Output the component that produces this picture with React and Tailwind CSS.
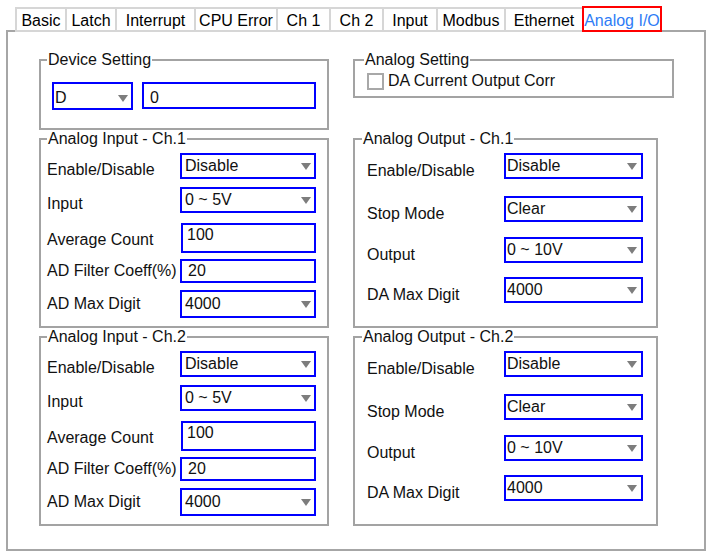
import React from "react";

const Tri = () => (
  <svg width="10" height="7" viewBox="0 0 10 7" className="shrink-0">
    <polygon points="0,0 10,0 5,7" fill="#7d7d7d" />
  </svg>
);

function Sel({ value, className }) {
  return (
    <div className={`flex justify-between border-2 border-[#0000ff] bg-white ${className}`}>
      <span className="whitespace-nowrap">{value}</span>
      <Tri />
    </div>
  );
}

function Inp({ value, className }) {
  return (
    <div className={`flex items-start border-2 border-[#0000ff] bg-white ${className}`}>
      <span className="whitespace-nowrap">{value}</span>
    </div>
  );
}

function Box({ title, className, legendCls, innerCls, children }) {
  return (
    <fieldset className={`border-2 border-[#a3a3a3] ${className}`}>
      <legend className={`px-[1px] leading-[18px] ${legendCls}`}>{title}</legend>
      <div className={innerCls}>{children}</div>
    </fieldset>
  );
}

function InputCh({ ch }) {
  return (
    <Box
      title={`Analog Input - Ch.${ch}`}
      className="w-[290px]"
      innerCls="pl-[6px] pr-[11px] pb-[8px]"
      legendCls="ml-[6px]"
    >
      <div className="flex items-start mt-[5px] h-[26px]">
        <div className="w-[133px] mt-[8px] whitespace-nowrap">Enable/Disable</div>
        <Sel value="Disable" className="w-[136px] h-[26px] items-center pl-[3px] pr-[3px]" />
      </div>
      <div className="flex items-start mt-[8px] h-[26px]">
        <div className="w-[133px] mt-[8px] whitespace-nowrap">Input</div>
        <Sel value="0 ~ 5V" className="w-[136px] h-[26px] items-center pl-[3px] pr-[3px]" />
      </div>
      <div className="flex items-start mt-[10px] h-[30px]">
        <div className="w-[133px] mt-[8px] whitespace-nowrap">Average Count</div>
        <Inp value="100" className="ml-[1px] w-[135px] h-[30px] pt-[1px] pl-[4px]" />
      </div>
      <div className="flex items-start mt-[6px] h-[24px]">
        <div className="w-[133px] mt-[3px] whitespace-nowrap">AD Filter Coeff(%)</div>
        <Inp value="20" className="w-[136px] h-[24px] pt-[1px] pl-[6px]" />
      </div>
      <div className="flex items-start mt-[7px] h-[28px]">
        <div className="w-[133px] mt-[5px] whitespace-nowrap">AD Max Digit</div>
        <Sel value="4000" className="w-[136px] h-[28px] items-center pl-[3px] pr-[3px]" />
      </div>
    </Box>
  );
}

function OutputCh({ ch }) {
  const rows = [
    ["Enable/Disable", "Disable", "mt-[5px]"],
    ["Stop Mode", "Clear", "mt-[17px]"],
    ["Output", "0 ~ 10V", "mt-[15px]"],
    ["DA Max Digit", "4000", "mt-[14px]"],
  ];
  return (
    <Box
      title={`Analog Output - Ch.${ch}`}
      className="w-[305px]"
      innerCls="pl-[12px] pr-[12px] pb-[23px]"
      legendCls="ml-[7px]"
    >
      {rows.map(([l, v, mt]) => (
        <div key={l} className={`flex items-start h-[26px] ${mt}`}>
          <div className="w-[137px] mt-[9px] whitespace-nowrap">{l}</div>
          <Sel value={v} className="w-[139px] h-[26px] items-center pl-[1px] pr-[4px]" />
        </div>
      ))}
    </Box>
  );
}

const tabs = [
  ["Basic", "w-[50px]"],
  ["Latch", "w-[50px]"],
  ["Interrupt", "w-[79px]"],
  ["CPU Error", "w-[82px]"],
  ["Ch 1", "w-[53px]"],
  ["Ch 2", "w-[53px]"],
  ["Input", "w-[54px]"],
  ["Modbus", "w-[68px]"],
  ["Ethernet", "w-[78px]"],
];

export default function App() {
  return (
    <div className="w-[714px] h-[558px] bg-white text-[#111] text-[16px] leading-[18px] [font-family:'Liberation_Sans',Arial,sans-serif] pl-[6px] pt-[6px]">
      <div className="w-[700px] flex items-end h-[26px]">
        <div className="w-[9px] h-[2px] bg-[#a6a6a6]" />
        {tabs.map(([t, w]) => (
          <div
            key={t}
            className={`${w} h-[25px] border-l-2 border-t-2 border-b-2 border-[#d6d6d6] flex items-end justify-center text-black whitespace-nowrap`}
          >
            {t}
          </div>
        ))}
        <div className="w-[80px] h-[26px] border-2 border-[#ff0000] flex items-end justify-center text-[#2e7cf6] whitespace-nowrap">
          Analog I/O
        </div>
        <div className="flex-1 h-[2px] bg-[#a6a6a6]" />
      </div>
      <div className="w-[700px] h-[519px] border-2 border-t-0 border-[#a6a6a6] pl-[31px] pt-[19px]">
        <div className="grid grid-cols-[290px_321px] gap-x-[24px] items-start">
          <Box title="Device Setting" className="w-[290px]" innerCls="pl-[11px] pb-[18px]" legendCls="ml-[6px]">
            <div className="flex items-start gap-[9px] mt-[13px]">
              <Sel value="D" className="w-[81px] h-[28px] items-start pt-[5px] pl-[1px] pr-[3px] [&>svg]:mt-[6px]" />
              <Inp value="0" className="w-[174px] h-[27px] pt-[5px] pl-[6px]" />
            </div>
          </Box>
          <Box title="Analog Setting" className="w-[321px]" innerCls="pl-[12px] pb-[6px]" legendCls="ml-[9px]">
            <div className="flex items-start mt-[4px]">
              <div className="w-[17px] h-[17px] border-2 border-[#a8a8a8] bg-white" />
              <div className="ml-[4px] -mt-[1px] whitespace-nowrap">DA Current Output Corr</div>
            </div>
          </Box>
          <InputCh ch={1} />
          <OutputCh ch={1} />
          <InputCh ch={2} />
          <OutputCh ch={2} />
        </div>
      </div>
    </div>
  );
}
